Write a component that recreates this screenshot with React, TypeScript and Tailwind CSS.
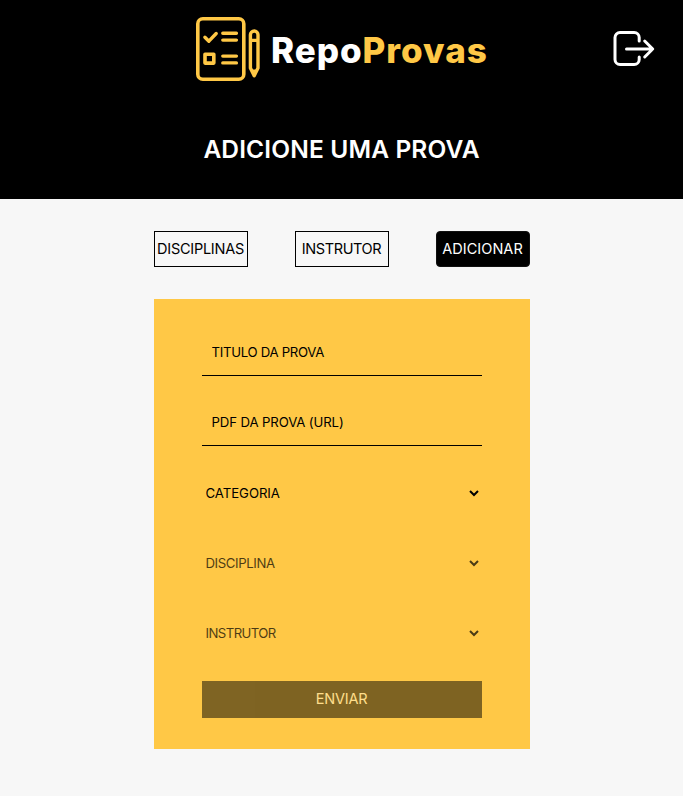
const tabs = [
  { label: 'DISCIPLINAS', active: false, tracking: 'tracking-[-0.26px]' },
  { label: 'INSTRUTOR', active: false, tracking: 'tracking-[-0.4px]' },
  { label: 'ADICIONAR', active: true, tracking: 'tracking-[0.04px]' },
];

const inputs = [
  { label: 'TITULO DA PROVA', tracking: 'tracking-[-0.3px]' },
  { label: 'PDF DA PROVA (URL)', tracking: 'tracking-[-0.12px]' },
];

const selects = [
  { label: 'CATEGORIA', disabled: false, tracking: 'tracking-[-0.05px]' },
  { label: 'DISCIPLINA', disabled: true, tracking: 'tracking-[-0.4px]' },
  { label: 'INSTRUTOR', disabled: true, tracking: 'tracking-[-0.58px]' },
];

function Logo() {
  return (
    <div className="flex items-center">
      <svg width="64" height="64" viewBox="0 0 64 64" fill="none" stroke="#ffc846" className="shrink-0">
        <rect x="1.8" y="1.8" width="46" height="60.4" rx="5" strokeWidth="3.6" />
        <g strokeWidth="3.4" strokeLinecap="round" strokeLinejoin="round">
          <path d="M8.9 20.2l4 4 7.3-7.7M26.8 16.3h13.6M26.8 23.1h13.6M26.8 39.1h13.6M26.8 45.9h13.6" />
          <path d="M54.4 51V17.8a3.8 3.8 0 0 1 7.6 0V51l-3.8 7.8zM54.4 23.4h7.6" />
          <path d="M55.4 53.2h5.6l-2.8 5.4z" fill="#ffc846" strokeWidth="1.5" />
        </g>
        <rect x="9" y="37.3" width="8.8" height="8.8" strokeWidth="3.6" strokeLinejoin="round" />
      </svg>
      <span className="ml-[11px] whitespace-nowrap pt-[3px] font-['Inter','Liberation_Sans',sans-serif] text-[35px] leading-[61px] font-extrabold tracking-[0.95px] text-white">
        Repo<span className="text-[#ffc846]">Provas</span>
      </span>
    </div>
  );
}

export default function App() {
  return (
    <div className="min-h-[796px] w-full bg-[#f7f7f7] font-['Inter','Liberation_Sans',sans-serif] text-black">
      <header className="h-[199px] bg-black text-white">
        <div className="grid h-[97px] grid-cols-[1fr_291px_1fr] items-center">
          <span />
          <Logo />
          <button aria-label="Sair" className="mr-[28px] justify-self-end">
            <svg width="42" height="36" viewBox="0 0 42 36" fill="none" stroke="white" strokeWidth="3" strokeLinecap="round" strokeLinejoin="round">
              <path d="M26.2 10V6.5a5 5 0 0 0-5-5H7a5 5 0 0 0-5 5v22a5 5 0 0 0 5 5h14.2a5 5 0 0 0 5-5V26M13.5 18h26M31.7 10l8 8-8 8" />
            </svg>
          </button>
        </div>
        <h1 className="mt-[34px] text-center text-[24.5px] leading-[37px] font-semibold tracking-[0.14px]">ADICIONE UMA PROVA</h1>
      </header>
      <main className="mx-auto w-[376px] pt-8">
        <nav className="flex justify-between">
          {tabs.map((t) => (
            <button
              key={t.label}
              className={`flex h-9 w-[94px] items-center justify-center whitespace-nowrap border text-[14.5px] ${t.tracking} ${
                t.active ? 'rounded-[4px] border-[#111] bg-black text-white' : 'border-black'
              }`}
            >
              {t.label}
            </button>
          ))}
        </nav>
        <form className="mt-8 flex h-[450px] flex-col gap-[22px] bg-[#ffc846] px-12 pt-[30px]">
          {inputs.map((f) => (
            <input
              key={f.label}
              placeholder={f.label}
              className={`mb-px h-[47px] w-full shrink-0 border-b border-black bg-transparent px-[10px] text-[13.2px] outline-none placeholder:text-black ${f.tracking}`}
            />
          ))}
          {selects.map((f) => (
            <select
              key={f.label}
              disabled={f.disabled}
              className={`h-12 w-full shrink-0 bg-transparent text-[13.2px] text-black disabled:opacity-70 ${f.tracking}`}
            >
              <option>{f.label}</option>
            </select>
          ))}
          <button type="button" disabled className="mt-[2px] h-[37px] w-full shrink-0 bg-black pb-[2px] text-[14.5px] tracking-[-0.2px] text-white opacity-50">
            <span className="text-[#fff2cf]">ENVIAR</span>
          </button>
        </form>
      </main>
    </div>
  );
}
